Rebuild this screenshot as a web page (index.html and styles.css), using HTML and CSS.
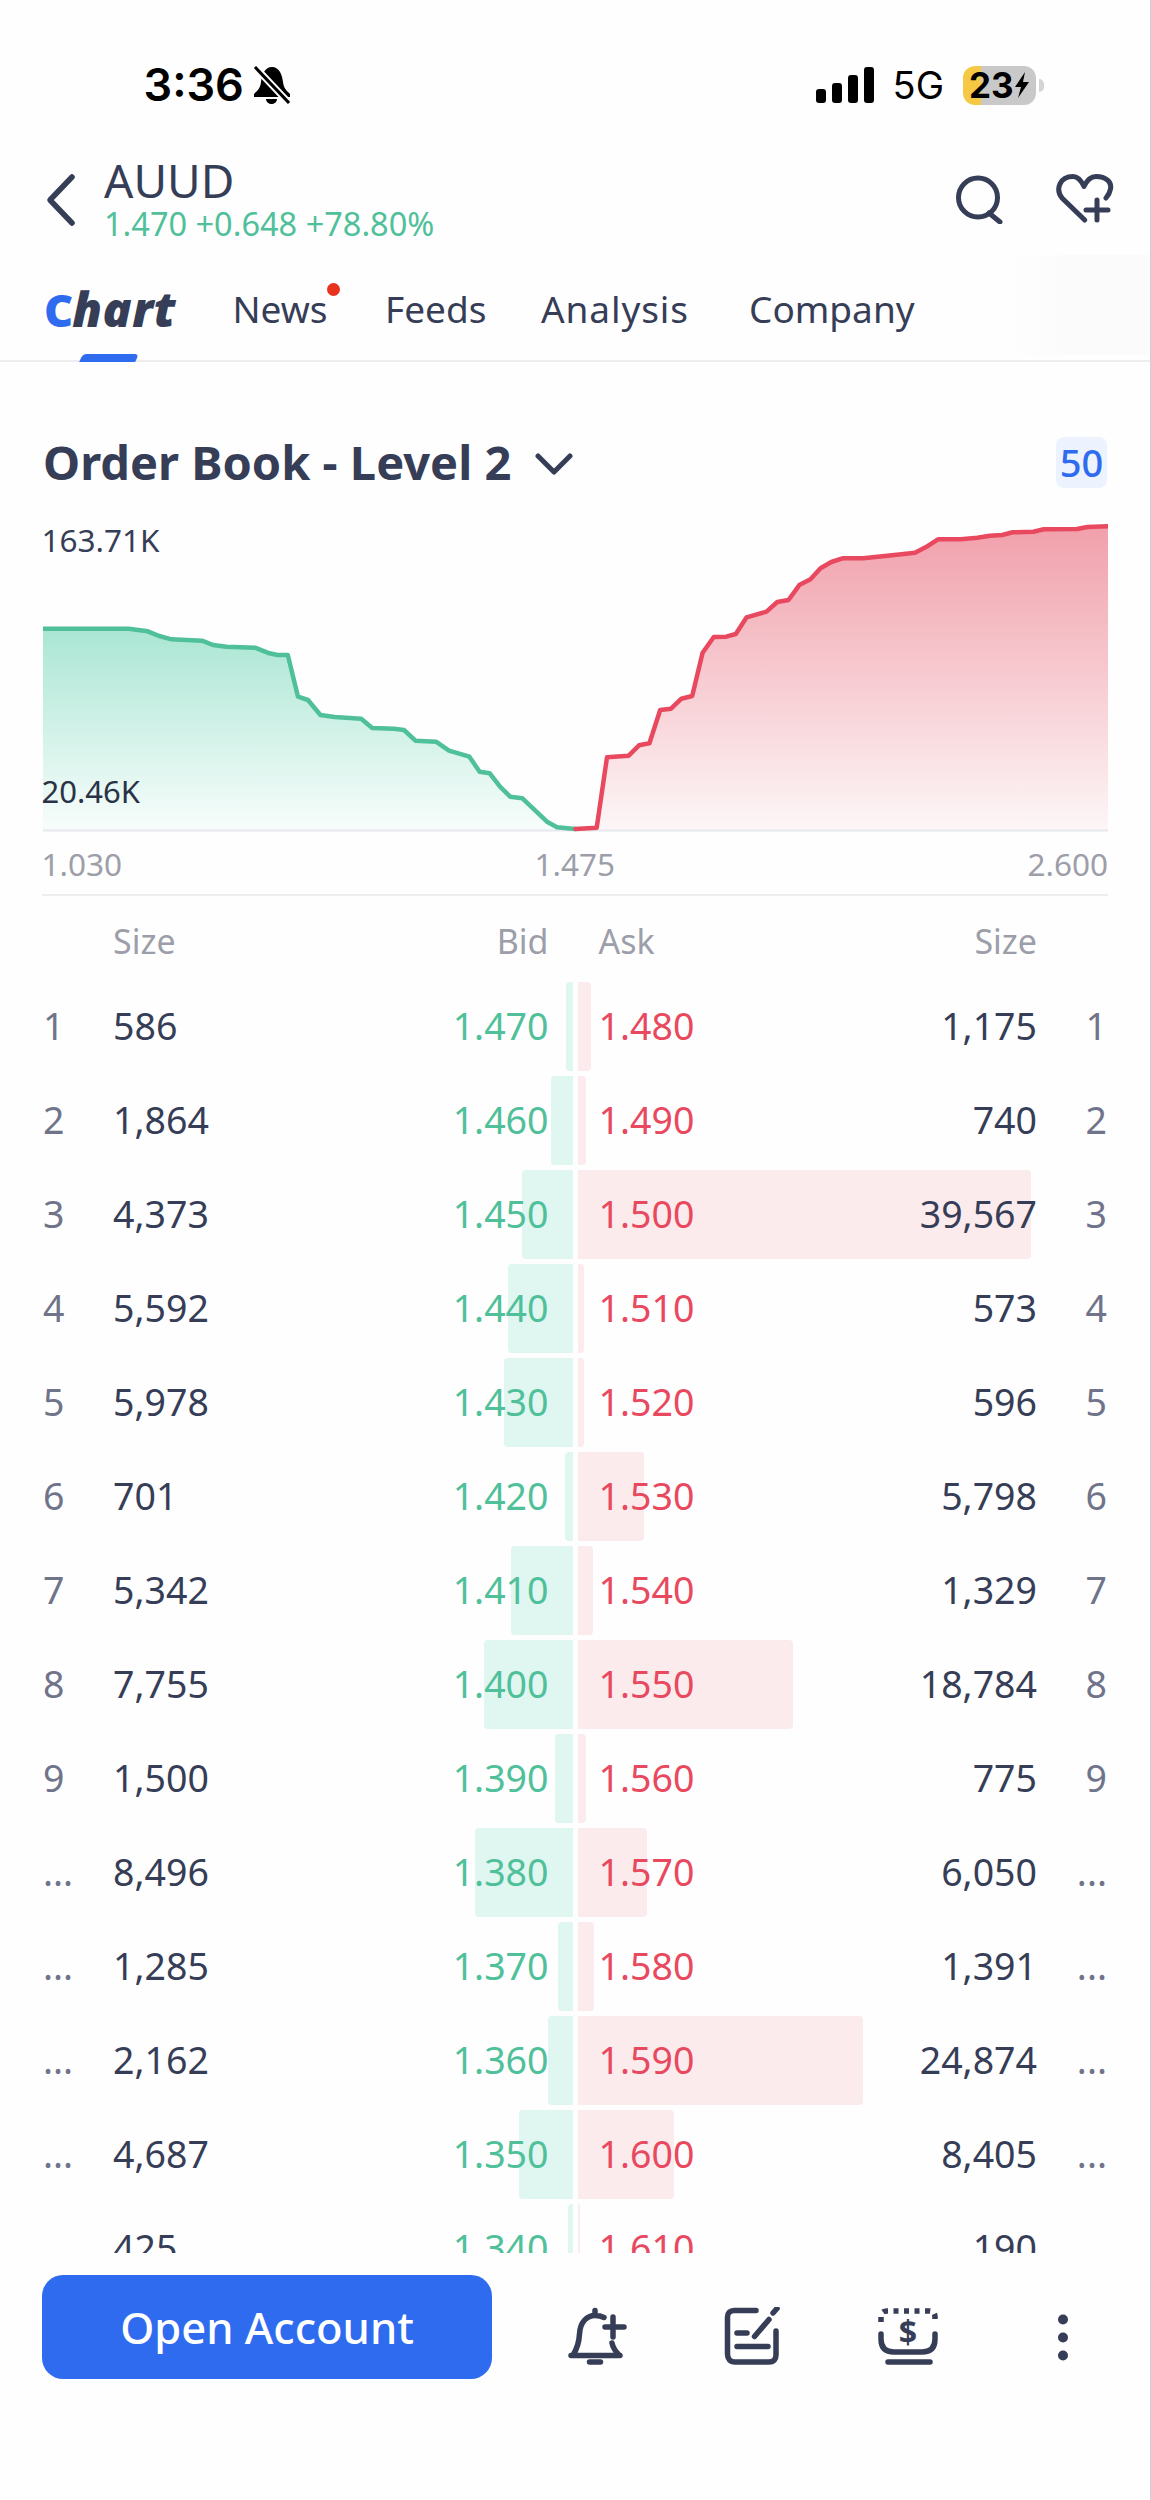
FILE: index.html
```html
<!DOCTYPE html>
<html lang="en">
<head>
<meta charset="utf-8">
<title>AUUD Order Book</title>
<link rel="stylesheet" href="styles.css">
</head>
<body>
<div class="page">
  <header class="status">
    <div class="status-left">
      <span class="time">3:36</span>
      <svg class="mute" viewBox="0 0 37 38"><path class="fill-black" d="M19 1C26 1 29 8 30 16C30.5 22 34 25 37 28V31H1V28C4 25 7.500 22 8 16C9 8 12 1 19 1Z"/><path class="fill-black" d="M13 33H24C24 36 21 38 18.500 38C16 38 13 36 13 33Z"/><path class="slash-w" d="M2 1L36 37"/><path class="slash-k" d="M2 1L36 37"/></svg>
    </div>
    <div class="status-right">
      <svg class="signal" viewBox="0 0 58 36"><rect x="0" y="22" width="10" height="14" rx="3"/><rect x="16" y="16" width="10" height="20" rx="3"/><rect x="32" y="8" width="10" height="28" rx="3"/><rect x="48" y="0" width="10" height="36" rx="3"/></svg>
      <span class="net">5G</span>
      <div class="battery"><span class="battery-num">23</span><svg class="bolt" viewBox="0 0 16 26"><path d="M11 0L1 15H7L4 26L15 10H9Z"/></svg></div>
      <span class="battery-tip"></span>
    </div>
  </header>

  <nav class="topbar">
    <svg class="back" viewBox="0 0 36 54"><path d="M29 4L7 27L29 50"/></svg>
    <div class="ticker">
      <div class="ticker-name">AUUD</div>
      <div class="ticker-quote">1.470 +0.648 +78.80%</div>
    </div>
    <svg class="search" viewBox="0 0 50 50"><circle cx="24" cy="23.500" r="19.500"/><path d="M35 39L46 48"/></svg>
    <svg class="heart" viewBox="0 0 60 50"><path d="M30.700 46L8 24C1 15 6 2.500 19 2.500C24 2.500 27 6 30 12.500C33 6 37 2.500 42 2.500C52 2.500 58 8 56.500 15C56 18 54.500 21 52 24"/><path d="M32 36H54M43 26V46"/></svg>
  </nav>

  <div class="tabs">
    <div class="tab tab-active"><span class="tab-c">C</span>hart<span class="tab-line"></span></div>
    <div class="tab tab-news">News<span class="tab-dot"></span></div>
    <div class="tab tab-feeds">Feeds</div>
    <div class="tab tab-analysis">Analysis</div>
    <div class="tab">Company</div>
  </div>

  <section class="book">
    <div class="book-head">
      <h1 class="book-title">Order Book - Level 2</h1>
      <svg class="caret" viewBox="0 0 38 22"><path d="M3 3L19 19L35 3"/></svg>
      <span class="badge">50</span>
    </div>

    <div class="depth">
      <span class="depth-y depth-max">163.71K</span>
      <span class="depth-y depth-min">20.46K</span>
      <svg class="depth-svg" viewBox="43 520 1065 312">
        <defs>
          <linearGradient id="gradBid" x1="0" y1="0" x2="0" y2="1"><stop offset="0" stop-color="#aae6d3"/><stop offset="1" stop-color="#f8fdfc"/></linearGradient>
          <linearGradient id="gradAsk" x1="0" y1="0" x2="0" y2="1"><stop offset="0" stop-color="#f1a0ab"/><stop offset="1" stop-color="#fdf6f7"/></linearGradient>
        </defs>
        <path fill="url(#gradBid)" d="M43 628.700L128.600 628.700L147.800 631.300L159.200 636L171.400 639.300L202 640.700L213 645L226.500 646.700L255 647.700L269.400 653.300L277.600 655L287.800 655L298 696.700L308 700L320.400 715L334.700 717L361.200 718.700L372.200 728L393.900 728.700L404 730L415.500 740.700L436 741.700L449 750.700L469.400 756.700L479.600 771.700L489.800 773.300L500 786.700L510.200 796.700L522.400 798.300L547 821.700L557 827.300L575.500 829L575.500 830L43 830Z"/>
        <path fill="url(#gradAsk)" d="M576 829L596.700 827.700L607 757.300L628.700 755.700L639 745.300L649.400 743.300L660.200 710L671 708.700L681.400 698.700L692.200 696L702.600 652.700L713.800 637L726.200 636.700L735.800 634L746.600 617.300L766.500 611.700L777.300 602L788.500 600L799.700 584.700L810.500 579.300L820.500 568.300L831.300 562L842.500 558.300L863.200 558.300L894.400 555L915 552.700L925.500 547.300L938 539.300L960.800 539.300L977.400 537.700L989.800 535.700L1002.300 535L1012.700 532.300L1033.400 531.700L1043.800 529.300L1077 529L1087.400 527L1108 526.300L1108 830L576 830Z"/>
        <path class="axis" d="M43 830.500H1108"/>
        <path class="line-bid" d="M43 628.700L128.600 628.700L147.800 631.300L159.200 636L171.400 639.300L202 640.700L213 645L226.500 646.700L255 647.700L269.400 653.300L277.600 655L287.800 655L298 696.700L308 700L320.400 715L334.700 717L361.200 718.700L372.200 728L393.900 728.700L404 730L415.500 740.700L436 741.700L449 750.700L469.400 756.700L479.600 771.700L489.800 773.300L500 786.700L510.200 796.700L522.400 798.300L547 821.700L557 827.300L575.500 829"/>
        <path class="line-ask" d="M575.500 829L596.700 827.700L607 757.300L628.700 755.700L639 745.300L649.400 743.300L660.200 710L671 708.700L681.400 698.700L692.200 696L702.600 652.700L713.800 637L726.200 636.700L735.800 634L746.600 617.300L766.500 611.700L777.300 602L788.500 600L799.700 584.700L810.500 579.300L820.500 568.300L831.300 562L842.500 558.300L863.200 558.300L894.400 555L915 552.700L925.500 547.300L938 539.300L960.800 539.300L977.400 537.700L989.800 535.700L1002.300 535L1012.700 532.300L1033.400 531.700L1043.800 529.300L1077 529L1087.400 527L1108 526.300"/>
      </svg>
    </div>
    <div class="axis-labels"><span>1.030</span><span>1.475</span><span>2.600</span></div>

    <div class="book-cols">
      <div class="side side-bid"><span class="c-size">Size</span><span class="c-price">Bid</span></div>
      <div class="side side-ask"><span class="c-price">Ask</span><span class="c-size">Size</span></div>
    </div>

    <div class="rows">
      <div class="row"><div class="side side-bid"><i class="bar" style="width:6.7px"></i><span class="c-rank">1</span><span class="c-size">586</span><span class="c-price">1.470</span></div><div class="side side-ask"><i class="bar" style="width:13.5px"></i><span class="c-price">1.480</span><span class="c-size">1,175</span><span class="c-rank">1</span></div></div>
      <div class="row"><div class="side side-bid"><i class="bar" style="width:21.4px"></i><span class="c-rank">2</span><span class="c-size">1,864</span><span class="c-price">1.460</span></div><div class="side side-ask"><i class="bar" style="width:8.5px"></i><span class="c-price">1.490</span><span class="c-size">740</span><span class="c-rank">2</span></div></div>
      <div class="row"><div class="side side-bid"><i class="bar" style="width:50.2px"></i><span class="c-rank">3</span><span class="c-size">4,373</span><span class="c-price">1.450</span></div><div class="side side-ask"><i class="bar" style="width:453.8px"></i><span class="c-price">1.500</span><span class="c-size">39,567</span><span class="c-rank">3</span></div></div>
      <div class="row"><div class="side side-bid"><i class="bar" style="width:64.1px"></i><span class="c-rank">4</span><span class="c-size">5,592</span><span class="c-price">1.440</span></div><div class="side side-ask"><i class="bar" style="width:6.6px"></i><span class="c-price">1.510</span><span class="c-size">573</span><span class="c-rank">4</span></div></div>
      <div class="row"><div class="side side-bid"><i class="bar" style="width:68.6px"></i><span class="c-rank">5</span><span class="c-size">5,978</span><span class="c-price">1.430</span></div><div class="side side-ask"><i class="bar" style="width:6.8px"></i><span class="c-price">1.520</span><span class="c-size">596</span><span class="c-rank">5</span></div></div>
      <div class="row"><div class="side side-bid"><i class="bar" style="width:8px"></i><span class="c-rank">6</span><span class="c-size">701</span><span class="c-price">1.420</span></div><div class="side side-ask"><i class="bar" style="width:66.5px"></i><span class="c-price">1.530</span><span class="c-size">5,798</span><span class="c-rank">6</span></div></div>
      <div class="row"><div class="side side-bid"><i class="bar" style="width:61.3px"></i><span class="c-rank">7</span><span class="c-size">5,342</span><span class="c-price">1.410</span></div><div class="side side-ask"><i class="bar" style="width:15.2px"></i><span class="c-price">1.540</span><span class="c-size">1,329</span><span class="c-rank">7</span></div></div>
      <div class="row"><div class="side side-bid"><i class="bar" style="width:89px"></i><span class="c-rank">8</span><span class="c-size">7,755</span><span class="c-price">1.400</span></div><div class="side side-ask"><i class="bar" style="width:215.5px"></i><span class="c-price">1.550</span><span class="c-size">18,784</span><span class="c-rank">8</span></div></div>
      <div class="row"><div class="side side-bid"><i class="bar" style="width:17.2px"></i><span class="c-rank">9</span><span class="c-size">1,500</span><span class="c-price">1.390</span></div><div class="side side-ask"><i class="bar" style="width:8.9px"></i><span class="c-price">1.560</span><span class="c-size">775</span><span class="c-rank">9</span></div></div>
      <div class="row"><div class="side side-bid"><i class="bar" style="width:97.4px"></i><span class="c-rank">...</span><span class="c-size">8,496</span><span class="c-price">1.380</span></div><div class="side side-ask"><i class="bar" style="width:69.4px"></i><span class="c-price">1.570</span><span class="c-size">6,050</span><span class="c-rank">...</span></div></div>
      <div class="row"><div class="side side-bid"><i class="bar" style="width:14.7px"></i><span class="c-rank">...</span><span class="c-size">1,285</span><span class="c-price">1.370</span></div><div class="side side-ask"><i class="bar" style="width:16px"></i><span class="c-price">1.580</span><span class="c-size">1,391</span><span class="c-rank">...</span></div></div>
      <div class="row"><div class="side side-bid"><i class="bar" style="width:24.8px"></i><span class="c-rank">...</span><span class="c-size">2,162</span><span class="c-price">1.360</span></div><div class="side side-ask"><i class="bar" style="width:285.3px"></i><span class="c-price">1.590</span><span class="c-size">24,874</span><span class="c-rank">...</span></div></div>
      <div class="row"><div class="side side-bid"><i class="bar" style="width:53.8px"></i><span class="c-rank">...</span><span class="c-size">4,687</span><span class="c-price">1.350</span></div><div class="side side-ask"><i class="bar" style="width:96.4px"></i><span class="c-price">1.600</span><span class="c-size">8,405</span><span class="c-rank">...</span></div></div>
      <div class="row"><div class="side side-bid"><i class="bar" style="width:4.9px"></i><span class="c-rank">...</span><span class="c-size">425</span><span class="c-price">1.340</span></div><div class="side side-ask"><i class="bar" style="width:2.2px"></i><span class="c-price">1.610</span><span class="c-size">190</span><span class="c-rank">...</span></div></div>
    </div>
  </section>

  <footer class="actions">
    <button class="open-account" type="button">Open Account</button>
    <div class="action">
      <svg viewBox="0 0 60 60"><path d="M4 48.500H53M6 48C10 42 12 36 12.500 27C13 15 20 8.500 28 8.500C31 8.500 34 9 37 10.500M45 36C46 41 49 45 52 48M28 3.500V8M38 20H57M46 10V30M22.500 55H33.500"/></svg>
    </div>
    <div class="action">
      <svg viewBox="0 0 60 60"><path d="M34 3.500H12C8 3.500 5.500 6 5.500 10V47C5.500 52 8 55 13 55H47C51.500 55 54 52.500 54 48V24M15 26H25M15 39.500H46M32.500 29.500L47 12.500M51 6L55 1.500"/></svg>
    </div>
    <div class="action">
      <svg viewBox="0 0 60 60"><path class="dash" d="M3 15V10Q3 4 9 4H51Q57 4 57 10V15"/><path d="M3 27V32Q3 45 16 45H44Q57 45 57 32V27M10 55H52"/><text class="dollar" x="30" y="37">$</text></svg>
    </div>
    <div class="action">
      <svg viewBox="0 0 60 60"><circle class="dot" cx="30" cy="12.500" r="5"/><circle class="dot" cx="30" cy="30.500" r="5"/><circle class="dot" cx="30" cy="48.500" r="5"/></svg>
    </div>
  </footer>
</div>
</body>
</html>
```
FILE: styles.css
```css
* { box-sizing: border-box; }
html, body { margin: 0; padding: 0; background: #fefefe; }
.page {
  width: 1151px;
  height: 2500px;
  overflow: hidden;
  font-family: "Noto Sans", "Open Sans", sans-serif;
  color: #363d56;
  border-right: 1px solid #d0d0d0;
}

/* status bar */
.status { height: 155px; padding-top: 15px; display: flex; align-items: center; justify-content: space-between; }
.status-left { display: flex; align-items: center; margin-left: 143.500px; }
.time { font-family: Inter, sans-serif; font-weight: 600; font-size: 45px; line-height: 50px; color: #000; }
.mute { width: 37px; height: 38px; margin-left: 9.500px; }
.fill-black { fill: #000; }
.slash-w { stroke: #fefefe; stroke-width: 7; fill: none; }
.slash-k { stroke: #000; stroke-width: 3; fill: none; }
.status-right { display: flex; align-items: center; margin-right: 106px; }
.signal { width: 58px; height: 36px; fill: #000; margin-right: 1.500px; }
.net { font-family: Inter, sans-serif; font-size: 38px; line-height: 40px; margin-left: 17px; color: #000; }
.battery {
  width: 73px; height: 39px; margin-left: 19px; border-radius: 12px;
  background: linear-gradient(90deg, #f6c945 0, #f6c945 18px, #c9c9c9 18px);
  display: flex; align-items: center; padding-left: 6px;
}
.battery-num { font-family: Inter, sans-serif; font-weight: 700; font-size: 35px; line-height: 39px; color: #000; }
.bolt { width: 16px; height: 26px; fill: #000; margin-left: 0; flex: none; }
.battery-tip { width: 5px; height: 13px; margin-left: 3px; background: #d4d4d4; border-radius: 0 5px 5px 0; }

/* top bar */
.topbar { height: 88px; display: flex; align-items: center; padding-left: 43px; }
.back { width: 36px; height: 54px; margin-top: 1px; fill: none; stroke: #363d56; stroke-width: 5.500; stroke-linecap: round; stroke-linejoin: round; }
.ticker { margin-left: 25px; }
.ticker-name { font-size: 46px; line-height: 50px; color: #363d56; }
.ticker-quote { font-size: 32.500px; line-height: 38px; color: #4fc09a; }
.search { width: 50px; height: 50px; margin-left: auto; fill: none; stroke: #363d56; stroke-width: 5; stroke-linecap: round; }
.heart { width: 60px; height: 50px; margin-left: 50px; margin-right: 36px; fill: none; stroke: #363d56; stroke-width: 5; stroke-linecap: round; stroke-linejoin: round; }

/* tabs */
.tabs { position: relative; height: 119px; padding: 41px 0 0 44px; display: flex; align-items: flex-start; gap: 60px; border-bottom: 2px solid #ededf0; }
.tabs::after { content: ""; position: absolute; right: 0; top: 12px; bottom: 5px; width: 145px; background: linear-gradient(90deg, rgba(251,251,252,0), #fbfbfc 45%); }
.tab { position: relative; font-size: 37px; line-height: 50px; color: #363d56; white-space: nowrap; }
.tab-active { width: 128.500px; font-size: 48px; font-weight: 900; font-style: italic; letter-spacing: .5px; }
.tab-news { width: 92.500px; }
.tab-feeds { width: 96px; }
.tab-analysis { width: 148px; letter-spacing: .9px; }
.tab-c { color: #2f6bef; font-style: normal; font-size: 45px; letter-spacing: -1px; }
.tab-line { position: absolute; left: 37px; bottom: -27px; width: 56px; height: 8px; background: #2f6bef; transform: skewX(-25deg); border-radius: 4px 4px 0 0; }
.tab-dot { position: absolute; right: -14.500px; top: -1px; width: 13px; height: 13px; border-radius: 50%; background: #e8321e; }

/* book */
.book { padding: 0 43px; }
.book-head { height: 51px; margin-top: 75px; display: flex; align-items: center; }
.book-title { margin: 0; font-size: 47px; line-height: 55px; font-weight: 700; color: #363d56; }
.caret { width: 38px; height: 22px; margin-left: 24px; margin-top: 3px; fill: none; stroke: #363d56; stroke-width: 5; stroke-linecap: round; stroke-linejoin: round; }
.badge { margin-left: auto; width: 51px; height: 51px; background: #ecf3fe; border-radius: 8px; color: #2f6bef; font-size: 38px; font-weight: 500; line-height: 51px; text-align: center; }

.depth { position: relative; height: 324px; margin-top: 32px; }
.depth-svg { display: block; width: 1065px; height: 312px; }
.depth-y { position: absolute; left: -1.500px; font-size: 31.500px; line-height: 40px; color: #363d56; }
.depth-max { top: 0; }
.depth-min { top: 251px; color: #2a3245; font-size: 31px; }
.axis { stroke: #e6e8ee; stroke-width: 2; fill: none; }
.line-bid, .line-ask { fill: none; stroke-width: 4.500; stroke-linejoin: round; stroke-linecap: round; }
.line-bid { stroke: #4fc09a; }
.line-ask { stroke: #e8495f; }

.axis-labels { display: flex; justify-content: space-between; height: 52px; margin-left: -1.500px; margin-right: -1px; padding-bottom: 11px; border-bottom: 2px solid #ededf0; font-size: 31.500px; line-height: 40px; color: #9c9ea9; }

.book-cols { display: flex; gap: 5px; margin-top: 21px; height: 46px; font-size: 34px; line-height: 48px; color: #9c9ea9; }
.book-cols .side-bid .c-size { margin-left: 70px; }
.book-cols .side-ask .c-size { margin-right: 70px; }

.rows { height: 1271px; margin-top: 19px; overflow: hidden; display: flex; flex-direction: column; gap: 5px; }
.row { flex: none; display: flex; gap: 5px; height: 89px; font-size: 37.500px; line-height: 88px; }
.side { position: relative; flex: 1 1 0; display: flex; min-width: 0; }
.bar { position: absolute; top: 0; bottom: 0; }
.side-bid .bar { right: 0; background: #e0f6f1; border-radius: 4px 0 0 4px; }
.side-ask .bar { left: 0; background: #fcebed; border-radius: 0 4px 4px 0; }
.c-rank { position: relative; width: 70px; flex: none; color: #70748a; }
.side-ask .c-rank { text-align: right; width: 70px; }
.c-size { position: relative; flex: 1 1 0; }
.side-ask .c-size { text-align: right; }
.c-price { position: relative; flex: none; }
.side-bid .c-price { padding-right: 24px; }
.side-ask .c-price { padding-left: 21px; }
.row .side-bid .c-price { color: #4fc09a; }
.row .side-ask .c-price { color: #e8495f; }

/* footer actions */
.actions { display: flex; align-items: center; height: 104px; margin-top: 22px; padding-left: 42px; }
.open-account { flex: none; width: 450px; height: 104px; margin-right: 26.750px; border: 0; border-radius: 21px; background: #2f6bef; color: #fff; font-family: "Noto Sans", sans-serif; font-size: 43.500px; font-weight: 500; }
.action { flex: none; width: 155.500px; display: flex; justify-content: center; }
.action svg { width: 60px; height: 60px; margin-top: 19px; fill: none; stroke: #363d56; stroke-width: 5.500; stroke-linecap: round; stroke-linejoin: round; }
.action .dash { stroke-dasharray: 5 5.500; stroke-linecap: butt; }
.action .dot { fill: #363d56; stroke: none; }
.dollar { font-family: "Noto Sans", sans-serif; font-size: 32px; font-weight: 700; text-anchor: middle; fill: #363d56; stroke: none; }
```
